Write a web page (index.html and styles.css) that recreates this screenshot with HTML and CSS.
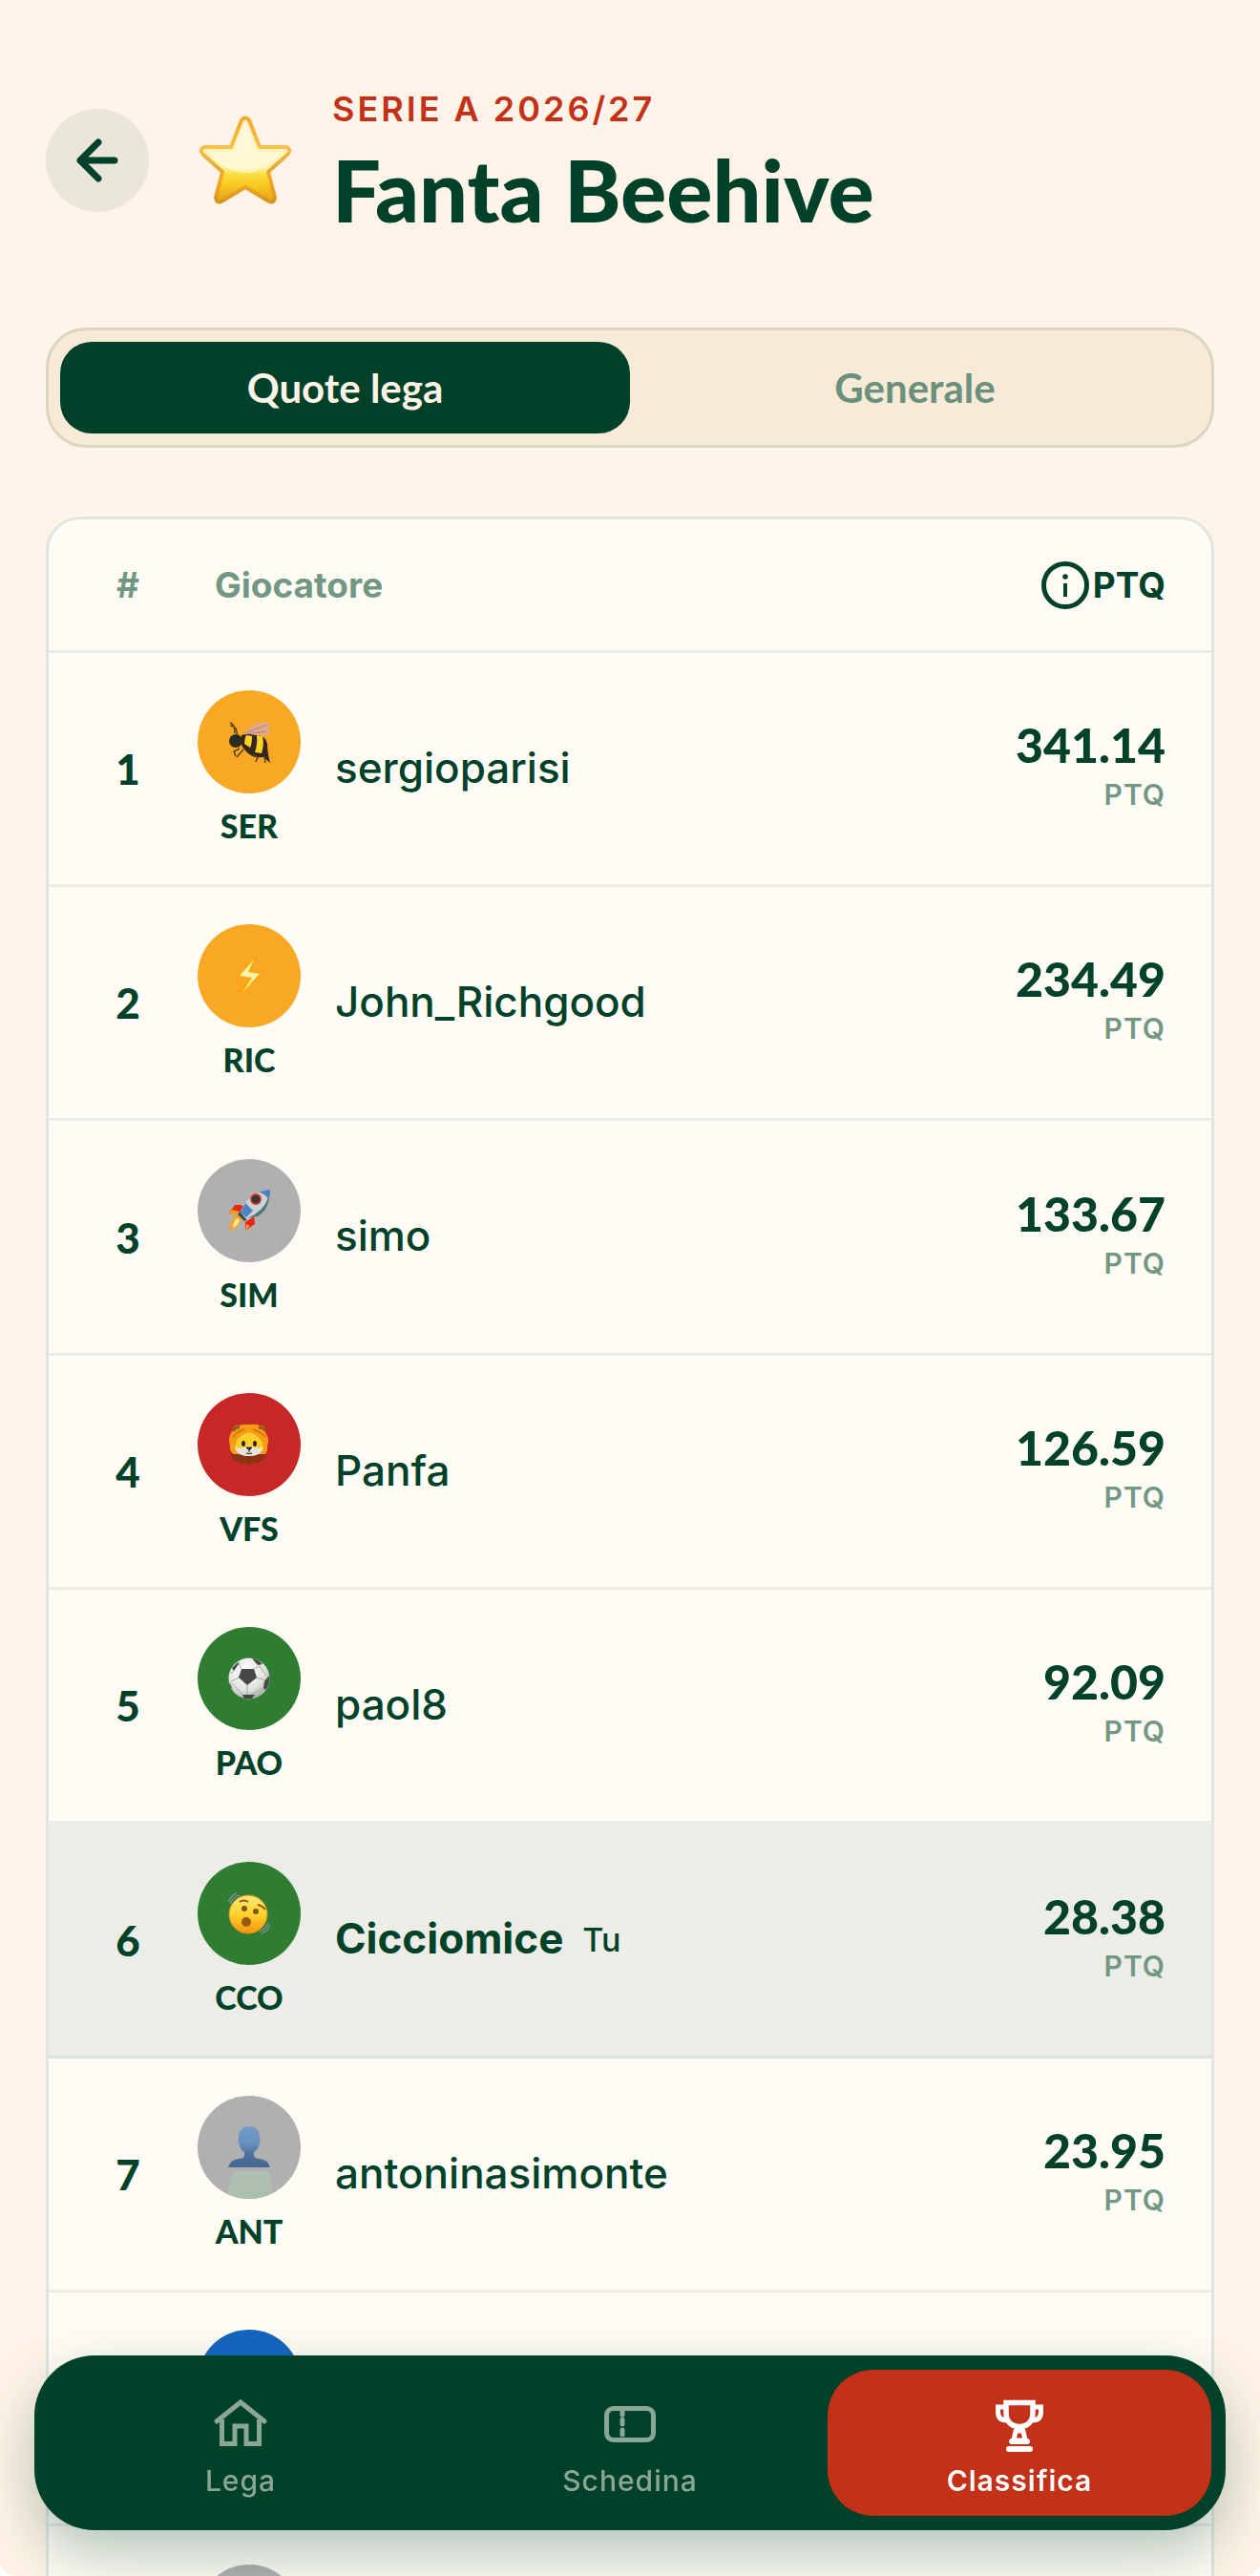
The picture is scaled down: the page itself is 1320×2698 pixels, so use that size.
FILE: index.html
```
<!DOCTYPE html>
<html lang="it">
<head>
  <meta charset="UTF-8" />
  <meta name="viewport" content="width=device-width, initial-scale=1" />
  <title>Fanta Beehive</title>
  <link rel="stylesheet" href="styles.css">
</head>
<body>
  <div class="screen">
    <header class="header">
      <button class="back" aria-label="Indietro">
        <svg width="48" height="48" viewBox="0 0 48 48" fill="none" stroke="currentColor" stroke-width="7" stroke-linecap="round" stroke-linejoin="round"><path d="M25 5 6 24l19 19M6 24h36"/></svg>
      </button>
      <svg class="league-icon" viewBox="0 0 108 108">
        <defs>
          <linearGradient id="star-fill" x1="0" y1="0" x2="0" y2="1">
            <stop offset="0" stop-color="#fbf3e0"/>
            <stop offset=".3" stop-color="#fff3c0"/>
            <stop offset=".58" stop-color="#fff2a8"/>
            <stop offset=".68" stop-color="#f9dc3c"/>
            <stop offset=".8" stop-color="#f8c922"/>
            <stop offset="1" stop-color="#eb9c1c"/>
          </linearGradient>
          <linearGradient id="star-edge" x1="0" y1="0" x2="0" y2="1">
            <stop offset="0" stop-color="#f7a823"/>
            <stop offset=".35" stop-color="#f5c04c"/>
            <stop offset=".6" stop-color="#e2ab3a"/>
            <stop offset=".75" stop-color="#f7a823"/>
            <stop offset="1" stop-color="#d0981f"/>
          </linearGradient>
        </defs>
        <path d="M49 12Q53 7 57 12L68 40 96 40Q102 43 97 48L77 66 84 93Q83 99 78 97L53 82 28 97Q23 99 22 93L29 66 9 48Q4 43 10 40L38 40Z" fill="url(#star-fill)" stroke="url(#star-edge)" stroke-width="4" stroke-linejoin="round"/>
        <path d="M53 16 65 45 92 45Q76 66 53 67 30 66 14 45L41 45Z" fill="#fffbea" opacity=".6"/>
      </svg>
      <div class="heading">
        <p class="season">SERIE A 2026/27</p>
        <h1>Fanta Beehive</h1>
      </div>
    </header>

    <main>
      <div class="tabs">
        <button class="tab active">Quote lega</button>
        <button class="tab">Generale</button>
      </div>

      <div class="card">
        <table class="ranking">
          <thead>
            <tr>
              <th class="rank">#</th>
              <th class="player-head">Giocatore</th>
              <th class="points-head">
                <span class="points-label">
                  <svg width="52" height="52" viewBox="0 0 52 52" fill="none" stroke="currentColor" stroke-width="5"><circle cx="26" cy="26" r="22.500"/><path d="M26 24v14" stroke-width="4"/><circle cx="26" cy="17" r="2.800" fill="currentColor" stroke="none"/></svg>PTQ
                </span>
              </th>
            </tr>
          </thead>
          <tbody>
            <tr>
              <td class="rank">1</td>
              <td>
                <div class="player">
                  <div class="team">
                    <span class="avatar orange">
                      <svg class="emoji" viewBox="0 0 44 44">
                        <path d="M16 13Q23 3 41 1q4 4 1 14l-22 1z" fill="#dfa98c"/>
                        <path d="M17 13 41 4M20 14l20-3" stroke="#b98572" fill="none"/>
                        <path d="M14 15q7-2 14 0 11-1 13 9 0 8 3 20l-7-6q-12 2-19-7-6-5-4-16z" fill="#35271a"/>
                        <path d="M19 15l6 1q0 8-2 12l-6-4q0-5 2-9zM30 15l6 1q2 8-1 18l-7-1q3-9 2-18z" fill="#fbd22a"/>
                        <circle cx="8" cy="21" r="7" fill="#332b1c"/>
                        <circle cx="8" cy="19" r="3" fill="#15302f"/>
                        <path d="M9 14Q10 6 2 5M7 13Q7 3 2 2M12 29l-6 3 2 5M16 30l-7 8M26 35l5 3-2 5M38 37l1 7" fill="none" stroke="#5b401b" stroke-width="1.500"/>
                      </svg>
                    </span>
                    <span class="tag">SER</span>
                  </div>
                  <span class="name">sergioparisi</span>
                </div>
              </td>
              <td class="points"><strong>341.14</strong><small>PTQ</small></td>
            </tr>
            <tr>
              <td class="rank">2</td>
              <td>
                <div class="player">
                  <div class="team">
                    <span class="avatar orange">
                      <svg class="emoji" viewBox="0 0 44 44">
                        <path d="M31 0 7 24l13 1L9 44l28-26-13-1z" fill="#f9a30e"/>
                        <path d="M27 5 12 22l13 2-9 14 17-18-12-2z" fill="#fff3b8" stroke="#fbd63b" stroke-width="1"/>
                      </svg>
                    </span>
                    <span class="tag">RIC</span>
                  </div>
                  <span class="name">John_Richgood</span>
                </div>
              </td>
              <td class="points"><strong>234.49</strong><small>PTQ</small></td>
            </tr>
            <tr>
              <td class="rank">3</td>
              <td>
                <div class="player">
                  <div class="team">
                    <span class="avatar grey">
                      <svg class="emoji" viewBox="0 0 44 44">
                        <path d="M14 16 7 16 0 26l9-1 8-6z" fill="#ee2611"/>
                        <path d="M27 28 28 36l-10 7 0-9z" fill="#ee2611"/>
                        <path d="M0 26 4 21l8 2-3 3zM18 43l1-7 4 2z" fill="#f89b25"/>
                        <path d="M8 27q4-2 7 4-3 8-14 12Q1 33 8 27z" fill="#f5a32c"/>
                        <path d="M9 30q3 0 3 3-2 5-7 7 0-6 4-10z" fill="#ffe68a"/>
                        <path d="M10 26 17 33 21 31 13 22z" fill="#364f4b"/>
                        <path d="M13 24Q20 3 44 0 45 20 20 32z" fill="#c9d3d4"/>
                        <path d="M20 30Q41 21 43 3 44 20 31 28z" fill="#547577"/>
                        <path d="M32 3Q39 0 44 0 45 5 42 10 39 4 32 3zM18 14l8 8-7 7-6-5z" fill="#4f82c5"/>
                        <circle cx="29" cy="10" r="5" fill="#283c39" stroke="#df3021" stroke-width="2"/>
                      </svg>
                    </span>
                    <span class="tag">SIM</span>
                  </div>
                  <span class="name">simo</span>
                </div>
              </td>
              <td class="points"><strong>133.67</strong><small>PTQ</small></td>
            </tr>
            <tr>
              <td class="rank">4</td>
              <td>
                <div class="player">
                  <div class="team">
                    <span class="avatar red">
                      <svg class="emoji" viewBox="0 0 44 44">
                        <path d="M3 25Q2 37 7 40l4-1 2 3 5-1 4 3 4-3 5 1 2-3 4-1q4-5 3-13z" fill="#8d3213"/>
                        <path d="M5 7Q5 1 12 2q4-2 10-1 7-1 11 1 7 0 6 7 5 8 2 14 1 5-2 9H6Q1 29 2 23-1 14 5 7z" fill="#f79a18"/>
                        <path d="M6 8q0-5 6-4M32 4q7 0 6 4" fill="none" stroke="#8b5a19" stroke-width="3"/>
                        <path d="M8 20Q11 12 22 9q10 3 14 11l1 6Q32 34 22 34 11 34 7 26z" fill="#fbd02b"/>
                        <path d="M7 25q7 2 15-2 8 4 15 2-2 9-15 9-13 0-15-9z" fill="#e6e4dc"/>
                        <path d="M5 14q5-6 12-8M39 14Q33 8 26 6" fill="none" stroke="#d9780d" stroke-width="2"/>
                        <ellipse cx="16" cy="21" rx="2" ry="3" fill="#32281b"/>
                        <ellipse cx="28" cy="21" rx="2" ry="3" fill="#32281b"/>
                        <path d="M19 25h6l-3 3zM22 27v3m-3 1q3 1 6 0" fill="#32281b" stroke="#32281b"/>
                      </svg>
                    </span>
                    <span class="tag">VFS</span>
                  </div>
                  <span class="name">Panfa</span>
                </div>
              </td>
              <td class="points"><strong>126.59</strong><small>PTQ</small></td>
            </tr>
            <tr>
              <td class="rank">5</td>
              <td>
                <div class="player">
                  <div class="team">
                    <span class="avatar green">
                      <svg class="emoji" viewBox="0 0 44 44">
                        <defs>
                          <radialGradient id="ball" cx=".4" cy=".3" r=".7">
                            <stop offset="0" stop-color="#ffffff"/>
                            <stop offset=".7" stop-color="#dfe3dd"/>
                            <stop offset="1" stop-color="#a9b0a9"/>
                          </radialGradient>
                        </defs>
                        <circle cx="22" cy="22" r="21.500" fill="url(#ball)"/>
                        <path d="M14 12h13l3 9-10 8-9-8z" fill="#474747"/>
                        <path d="M14 12 11 6M27 12l6-3M30 21l9 3M20 29v10M11 21l-8 4M33 9l7 10M11 6 3 17M4 27l11 12M24 39l13-7" stroke="#a5aaa4" fill="none"/>
                        <path d="M25 1q7 1 11 6l-5 1zM4 11l5-5 3-1-6 9zM38 25l5-6q1 9-4 15l-2-2zM15 39h13l-3 4H17zM1 25l4 9-3-4z" fill="#464846"/>
                      </svg>
                    </span>
                    <span class="tag">PAO</span>
                  </div>
                  <span class="name">paol8</span>
                </div>
              </td>
              <td class="points"><strong>92.09</strong><small>PTQ</small></td>
            </tr>
            <tr class="me">
              <td class="rank">6</td>
              <td>
                <div class="player">
                  <div class="team">
                    <span class="avatar green">
                      <svg class="emoji" viewBox="0 0 44 44">
                        <defs>
                          <linearGradient id="face" x1="0" y1="0" x2="0" y2="1">
                            <stop offset="0" stop-color="#ffe87a"/>
                            <stop offset=".5" stop-color="#fdd32c"/>
                            <stop offset="1" stop-color="#f7930f"/>
                          </linearGradient>
                        </defs>
                        <path d="M0 10Q3 3 9 1M2 12Q4 5 12 3M35 43q6-2 9-9M33 41q6-2 9-9" fill="none" stroke="#77908b" stroke-width="1.500"/>
                        <circle cx="21" cy="23" r="20" fill="url(#face)" stroke="#dd901c" stroke-width="1"/>
                        <path d="M12 10q4-3 9 0M31 13q5 1 8 5" fill="none" stroke="#8b5616" stroke-width="2"/>
                        <circle cx="17" cy="17" r="3" fill="#855211"/>
                        <circle cx="29" cy="20" r="3" fill="#855211"/>
                        <circle cx="19" cy="31" r="5" fill="#945a0d"/>
                      </svg>
                    </span>
                    <span class="tag">CCO</span>
                  </div>
                  <span class="name">Cicciomice</span>
                  <span class="you">Tu</span>
                </div>
              </td>
              <td class="points"><strong>28.38</strong><small>PTQ</small></td>
            </tr>
            <tr>
              <td class="rank">7</td>
              <td>
                <div class="player">
                  <div class="team">
                    <span class="avatar grey">
                      <svg class="glow" viewBox="0 0 108 108"><path d="M37 79h38l5 29H29z" fill="#adbfb0"/></svg>
                      <svg class="emoji" viewBox="0 0 44 44">
                        <defs>
                          <linearGradient id="bust" x1="0" y1="0" x2="0" y2="1">
                            <stop offset="0" stop-color="#729bc4"/>
                            <stop offset=".4" stop-color="#6792c0"/>
                            <stop offset=".7" stop-color="#4a6f98"/>
                            <stop offset="1" stop-color="#46698f"/>
                          </linearGradient>
                        </defs>
                        <path d="M22 0C15 0 11 5 11 11c0 3-1 3 0 7q2 7 6 9v4q-1 3-6 3-9 1-11 9h44q-2-8-11-9-6 0-6-4v-3q5-3 6-9 1-4 0-7C33 4 29 0 22 0z" fill="url(#bust)"/>
                      </svg>
                    </span>
                    <span class="tag">ANT</span>
                  </div>
                  <span class="name">antoninasimonte</span>
                </div>
              </td>
              <td class="points"><strong>23.95</strong><small>PTQ</small></td>
            </tr>
            <tr>
              <td class="rank"></td>
              <td><div class="player"><div class="team"><span class="avatar blue"></span><span class="tag"></span></div></div></td>
              <td class="points"></td>
            </tr>
            <tr>
              <td class="rank"></td>
              <td><div class="player"><div class="team"><span class="avatar grey"></span><span class="tag"></span></div></div></td>
              <td class="points"></td>
            </tr>
          </tbody>
        </table>
      </div>
    </main>

    <nav class="bottom-nav">
      <a href="#lega">
        <svg width="60" height="60" viewBox="0 0 60 60" fill="none" stroke="currentColor" stroke-width="5" stroke-linecap="round"><path d="M5 27 30 7l25 20"/><path d="M10.500 25v25.500H24V32h12v18.500h13.500V25" stroke-linecap="butt"/></svg>
        <span>Lega</span>
      </a>
      <a href="#schedina">
        <svg width="60" height="60" viewBox="0 0 60 60" fill="none" stroke="currentColor" stroke-width="5" stroke-linecap="round"><rect x="5.500" y="13.500" width="49" height="33" rx="7"/><path d="M22 14v6M22 25v5M22 36v5"/></svg>
        <span>Schedina</span>
      </a>
      <a href="#classifica" class="active">
        <svg width="60" height="60" viewBox="0 0 60 60" fill="none" stroke="currentColor" stroke-width="5" stroke-linecap="round" stroke-linejoin="round"><path d="M16 7.500h28v11c0 8-5 14-14 14s-14-6-14-14z" stroke-width="5.500" stroke-linejoin="miter"/><path d="M15 12H7.500v5c0 6 3 9 9 9M45 12h7.500v5c0 6-3 9-9 9" stroke-linejoin="miter"/><path d="M26 37h8l2 10H24z"/><path d="M22 48h16M19 56h22" stroke-width="6"/></svg>
        <span>Classifica</span>
      </a>
    </nav>
  </div>
</body>
</html>
```
FILE: styles.css
```
* {
  box-sizing: border-box;
}

body {
  margin: 0;
  background: #fff;
  color: #00412a;
  font-family: Inter, "Open Sans", sans-serif;
}

button {
  border: none;
  padding: 0;
  font-family: inherit;
  color: inherit;
  cursor: pointer;
}

svg {
  display: block;
}

.screen {
  height: 100vh;
  overflow: hidden;
  background: #fff4e7;
  border-radius: 0 0 16px 16px;
  padding: 90px 48px 0;
}

/* header */
.header {
  display: flex;
  align-items: center;
  margin-bottom: 97px;
}

.back {
  width: 108px;
  height: 108px;
  border-radius: 50%;
  background: #eae6d9;
  display: flex;
  align-items: center;
  justify-content: center;
}

.league-icon {
  width: 108px;
  height: 108px;
  margin: 0 36px 0 48px;
}

.season {
  margin: 0 0 12px;
  font-size: 36px;
  line-height: 48px;
  font-weight: 600;
  letter-spacing: 3px;
  color: #c23118;
}

h1 {
  margin: 0;
  font-family: Lato, sans-serif;
  font-size: 90px;
  line-height: 96px;
  font-weight: 900;
}

/* tabs */
.tabs {
  display: grid;
  grid-template-columns: 1fr 1fr;
  padding: 12px;
  margin-bottom: 72px;
  background: #f7ead7;
  border: 3px solid #dbd6c0;
  border-radius: 42px;
}

.tab {
  height: 96px;
  border-radius: 33px;
  background: none;
  font-family: Lato, sans-serif;
  font-size: 42px;
  font-weight: 700;
  color: #6b917c;
}

.tab.active {
  background: #00412a;
  color: #fff4e7;
}

/* ranking */
.card {
  background: #fffcf5;
  border: 3px solid #e0e6df;
  border-radius: 36px;
  overflow: hidden;
}

.ranking {
  width: 100%;
  border-collapse: separate;
  border-spacing: 0;
}

th, td {
  padding: 0;
  border-bottom: 3px solid #e9ede6;
}

th {
  height: 140px;
  font-size: 37px;
  font-weight: 700;
  text-align: left;
  color: #729783;
}

td {
  height: 245px;
}

tr:nth-child(3n) td {
  height: 246px;
}

.rank {
  width: 156px;
  padding: 0 32px 0 42px;
  text-align: center;
}

td.rank {
  font-family: Lato, sans-serif;
  font-size: 44px;
  font-weight: 900;
}

.player-head {
  padding-left: 18px;
}

.points-head, .points {
  padding-right: 48px;
  text-align: right;
}

.points-label {
  display: flex;
  align-items: center;
  justify-content: flex-end;
  gap: 3px;
  color: #00412a;
}

.player {
  display: flex;
  align-items: center;
}

.team {
  width: 108px;
  margin-right: 36px;
}

.avatar {
  position: relative;
  display: flex;
  align-items: center;
  justify-content: center;
  height: 108px;
  border-radius: 50%;
  overflow: hidden;
  margin-bottom: 12px;
}

.avatar.orange { background: #f9a825; }
.avatar.grey { background: #b0b0b0; }
.avatar.red { background: #c62828; }
.avatar.green { background: #2e7d32; }
.avatar.blue { background: #1565c0; }

.emoji {
  position: relative;
  width: 44px;
  height: 44px;
}

.glow {
  position: absolute;
  inset: 0;
}

.tag {
  display: block;
  height: 44px;
  line-height: 44px;
  text-align: center;
  font-family: Lato, sans-serif;
  font-size: 34px;
  font-weight: 900;
}

.name {
  padding-bottom: 3px;
  font-size: 44px;
  font-weight: 500;
}

.me td {
  background: #ecede6;
  border-bottom-color: #dfe5dd;
}

.me .name {
  font-weight: 700;
}

.you {
  margin-left: 20px;
  font-size: 34px;
  font-weight: 500;
}

.points strong {
  display: block;
  font-family: Lato, sans-serif;
  font-size: 50px;
  line-height: 64px;
  font-weight: 900;
}

.points small {
  display: block;
  padding-bottom: 10px;
  font-size: 30px;
  line-height: 40px;
  font-weight: 600;
  letter-spacing: 1px;
  color: #729783;
}

/* bottom nav */
.bottom-nav {
  position: fixed;
  left: 36px;
  right: 36px;
  bottom: 48px;
  display: grid;
  grid-template-columns: repeat(3, 1fr);
  gap: 6px;
  padding: 15px;
  background: #00412a;
  border-radius: 63px;
  box-shadow: 0 24px 60px rgba(0, 65, 42, 0.3);
}

.bottom-nav a {
  display: flex;
  flex-direction: column;
  align-items: center;
  height: 153px;
  padding-top: 27px;
  gap: 8px;
  border-radius: 48px;
  font-size: 30px;
  line-height: 42px;
  font-weight: 500;
  letter-spacing: 1px;
  color: #8ca694;
  text-decoration: none;
}

.bottom-nav a.active {
  background: #c23118;
  color: #fff;
  font-weight: 600;
}
```
